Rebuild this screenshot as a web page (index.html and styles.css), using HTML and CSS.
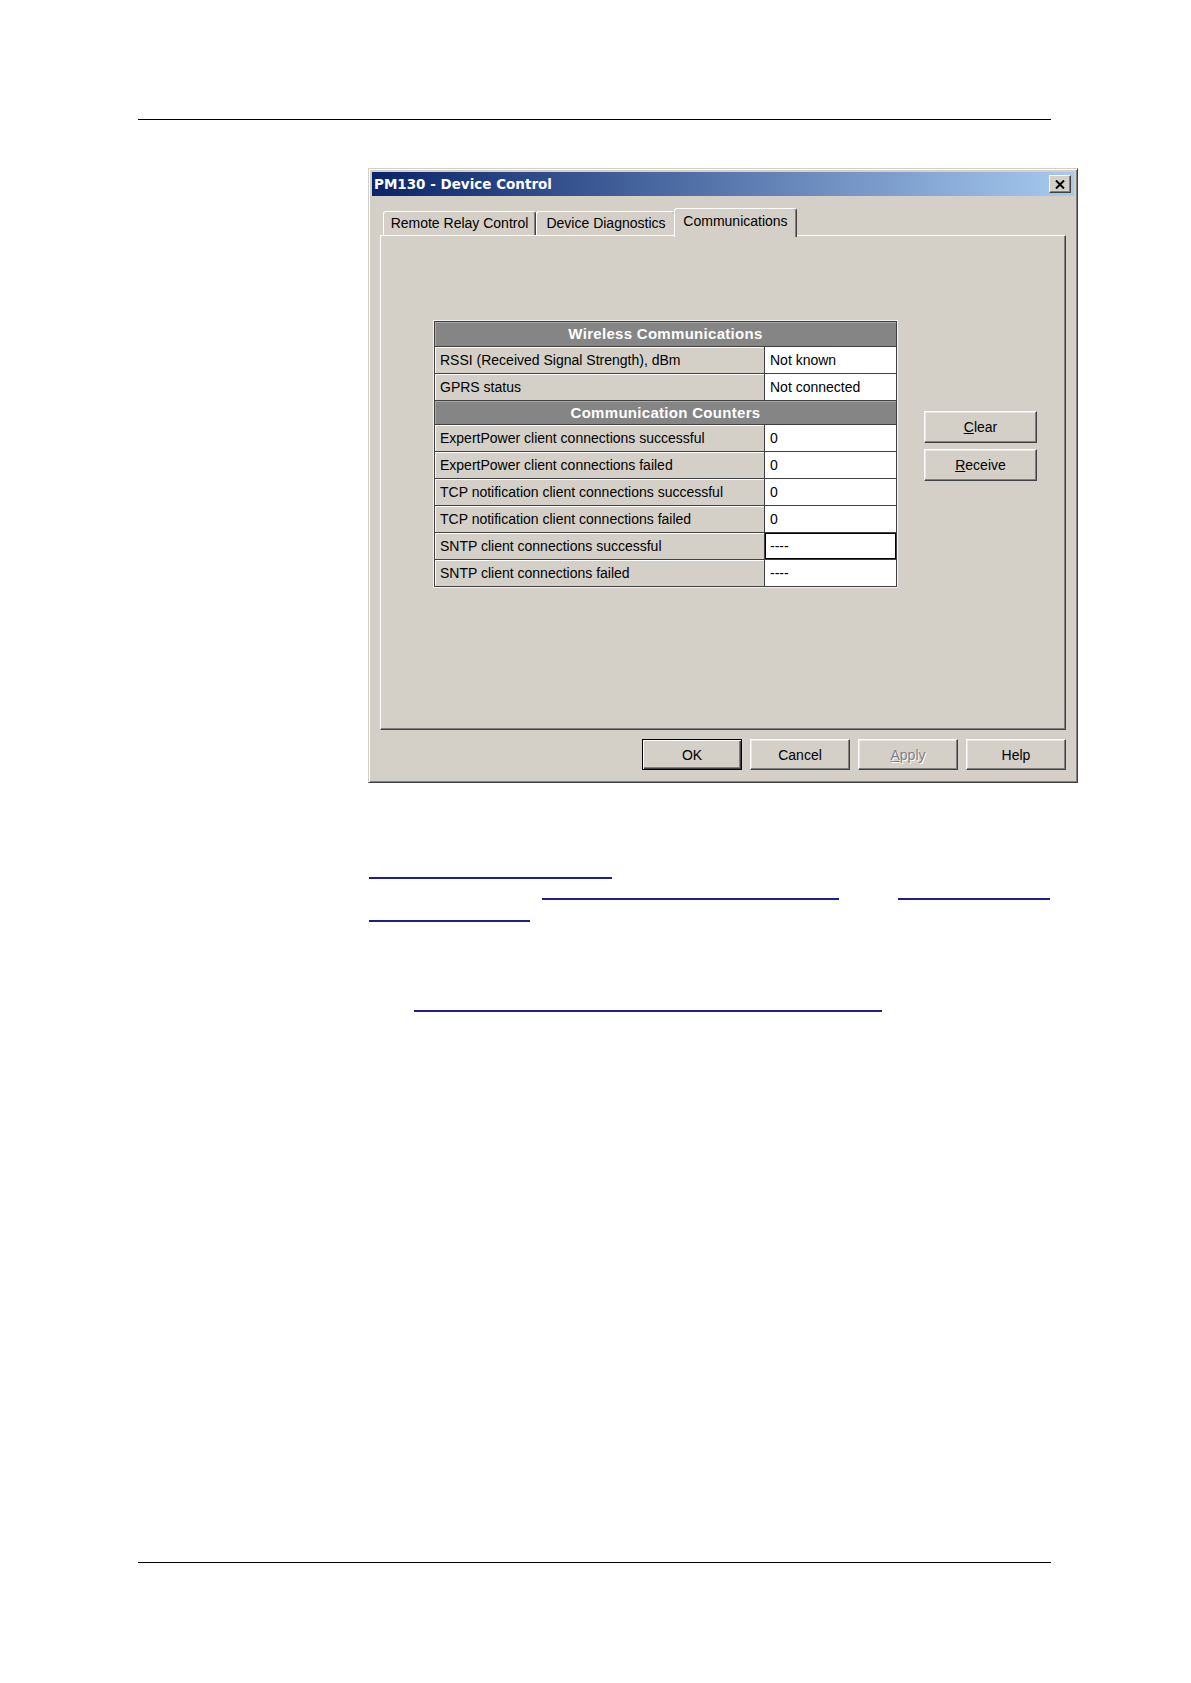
FILE: index.html
```html
<!DOCTYPE html>
<html lang="en">
<head>
<meta charset="utf-8">
<title>PM130 - Device Control</title>
<link rel="stylesheet" href="styles.css">
</head>
<body>
<div class="page">
  <div class="rule"></div>

  <div class="dialog">
    <div class="titlebar">
      <span class="title">PM130 - Device Control</span>
      <button class="close" aria-label="Close">
        <svg width="10" height="9" viewBox="0 0 10 9"><path d="M1 0.5 L9 8.5 M9 0.5 L1 8.5" stroke="#000" stroke-width="2" fill="none"/></svg>
      </button>
    </div>

    <div class="tabs">
      <div class="tab t1">Remote Relay Control</div>
      <div class="tab t2">Device Diagnostics</div>
      <div class="tab active">Communications</div>
    </div>

    <div class="panel">
      <div class="grid-wrap">
        <div class="grid">
          <div class="hd">Wireless Communications</div>
          <div class="lbl">RSSI (Received Signal Strength), dBm</div><div class="val">Not known</div>
          <div class="lbl">GPRS status</div><div class="val">Not connected</div>
          <div class="hd hd2">Communication Counters</div>
          <div class="lbl">ExpertPower client connections successful</div><div class="val">0</div>
          <div class="lbl">ExpertPower client connections failed</div><div class="val">0</div>
          <div class="lbl">TCP notification client connections successful</div><div class="val">0</div>
          <div class="lbl">TCP notification client connections failed</div><div class="val">0</div>
          <div class="lbl">SNTP client connections successful</div><div class="val focus">----</div>
          <div class="lbl">SNTP client connections failed</div><div class="val">----</div>
        </div>
      </div>
      <div class="side">
        <button class="btn side-btn"><u>C</u>lear</button>
        <button class="btn side-btn"><u>R</u>eceive</button>
      </div>
    </div>

    <div class="footer">
      <button class="btn foot-btn def">OK</button>
      <button class="btn foot-btn">Cancel</button>
      <button class="btn foot-btn disabled"><u>A</u>pply</button>
      <button class="btn foot-btn">Help</button>
    </div>
  </div>

  <div class="links">
    <div class="lrow r1"><a class="ul l1"></a></div>
    <div class="lrow r2"><a class="ul l2a"></a><a class="ul l2b"></a></div>
    <div class="lrow r3"><a class="ul l3"></a></div>
    <div class="lrow r4"><a class="ul l4"></a></div>
  </div>

  <div class="rule bottom"></div>
</div>
</body>
</html>
```

FILE: styles.css
```css
* { box-sizing: border-box; }
html, body { margin: 0; background: #fff; }
body {
  font-family: "Liberation Sans", Arial, sans-serif;
  font-size: 14px;
  color: #000;
}
.page { padding-top: 119px; padding-bottom: 100px; }

.rule { margin-left: 138px; width: 913px; height: 1px; background: #000; }
.rule.bottom { margin-top: 550px; }

/* dialog window */
.dialog {
  margin: 48px 0 0 368px;
  width: 710px;
  height: 615px;
  background: #d4d0c8;
  border: 1px solid;
  border-color: #d4d0c8 #404040 #404040 #d4d0c8;
  box-shadow: inset 1px 1px 0 #fff, inset -1px -1px 0 #808080;
  padding: 3px;
  display: flex;
  flex-direction: column;
}
.titlebar {
  height: 24px;
  flex: none;
  background: linear-gradient(to right, #0a246a, #a6caf0);
  display: flex;
  align-items: center;
  justify-content: space-between;
  padding: 0 3px 0 2px;
}
.title {
  font-family: "DejaVu Sans", Verdana, sans-serif;
  font-weight: bold;
  font-size: 13.5px;
  color: #fff;
  white-space: nowrap;
}
.close {
  width: 22px;
  height: 18px;
  padding: 0;
  background: #d4d0c8;
  border: 1px solid;
  border-color: #fff #404040 #404040 #fff;
  box-shadow: inset -1px -1px 0 #808080;
  display: flex;
  align-items: center;
  justify-content: center;
}

/* tabs */
.tabs {
  margin-top: 12px;
  height: 27px;
  flex: none;
  display: flex;
  align-items: flex-end;
  padding-left: 11px;
}
.tab {
  height: 24px;
  border-top: 1px solid #fff;
  border-left: 1px solid #fff;
  border-right: 1px solid #404040;
  box-shadow: inset -1px 0 0 #808080;
  border-radius: 3px 3px 0 0;
  text-align: center;
  line-height: 22px;
  white-space: nowrap;
  background: #d4d0c8;
}
.t1 { width: 153px; }
.t2 { width: 140px; }
.tab.active {
  width: 123px;
  height: 29px;
  margin-left: -2px;
  margin-bottom: -2px;
  line-height: 25px;
  position: relative;
  z-index: 1;
}

/* tab panel */
.panel {
  margin: 0 8px 0 8px;
  height: 495px;
  flex: none;
  border: 1px solid;
  border-color: #fff #404040 #404040 #fff;
  box-shadow: inset -1px -1px 0 #808080;
  display: flex;
  align-items: flex-start;
  padding: 84px 0 0 52px;
}
.grid-wrap {
  border: 1px solid #f2f1ed;
}
.grid {
  display: grid;
  grid-template-columns: 330px 132px;
  border-top: 1px solid #404040;
  border-left: 1px solid #404040;
}
.grid > div {
  height: 27px;
  line-height: 26px;
  border-right: 1px solid #404040;
  border-bottom: 1px solid #404040;
  white-space: nowrap;
  overflow: hidden;
}
.grid > .hd {
  grid-column: 1 / -1;
  height: 25px;
  line-height: 24px;
  background: #858585;
  color: #fff;
  font-weight: bold;
  font-size: 15px;
  letter-spacing: 0.3px;
  text-align: center;
  box-shadow: inset 1px 1px 0 #a9a9a9;
}
.grid > .hd2 { height: 24px; line-height: 23px; }
.grid > .lbl {
  background: #d4d0c8;
  padding-left: 5px;
  box-shadow: inset 1px 1px 0 #fff;
}
.grid > .val {
  background: #fff;
  padding-left: 5px;
}
.grid > .focus { box-shadow: inset 0 0 0 1px #000; }

.side {
  margin: 91px 0 0 26px;
  display: flex;
  flex-direction: column;
  gap: 6px;
}

/* buttons */
.btn {
  background: #d4d0c8;
  border: 1px solid;
  border-color: #fff #404040 #404040 #fff;
  box-shadow: inset -1px -1px 0 #808080, inset 1px 1px 0 #e9e7e3;
  font-family: "Liberation Sans", Arial, sans-serif;
  font-size: 14px;
  color: #000;
  padding: 0;
}
.side-btn { width: 113px; height: 32px; }
.footer {
  margin-top: 9px;
  display: flex;
  justify-content: flex-end;
  gap: 8px;
  padding-right: 8px;
}
.foot-btn { width: 100px; height: 31px; }
.btn.def {
  border-color: #000;
  box-shadow: inset 1px 1px 0 #fff, inset -1px -1px 0 #404040, inset -2px -2px 0 #808080;
}
.btn.disabled { color: #808080; text-shadow: 1px 1px 0 #fff; }

/* hyperlink underlines (link text not rendered in the source) */
.links { margin: 94px 0 0 368px; }
.lrow { display: flex; height: 2px; }
.ul { display: block; height: 2px; background: #1f1f8c; }
.r2 { margin-top: 19px; }
.r3 { margin-top: 20px; }
.r4 { margin-top: 88px; }
.l1 { width: 243px; margin-left: 1px; }
.l2a { width: 297px; margin-left: 174px; }
.l2b { width: 152px; margin-left: 59px; }
.l3 { width: 161px; margin-left: 1px; }
.l4 { width: 468px; margin-left: 46px; }
```
